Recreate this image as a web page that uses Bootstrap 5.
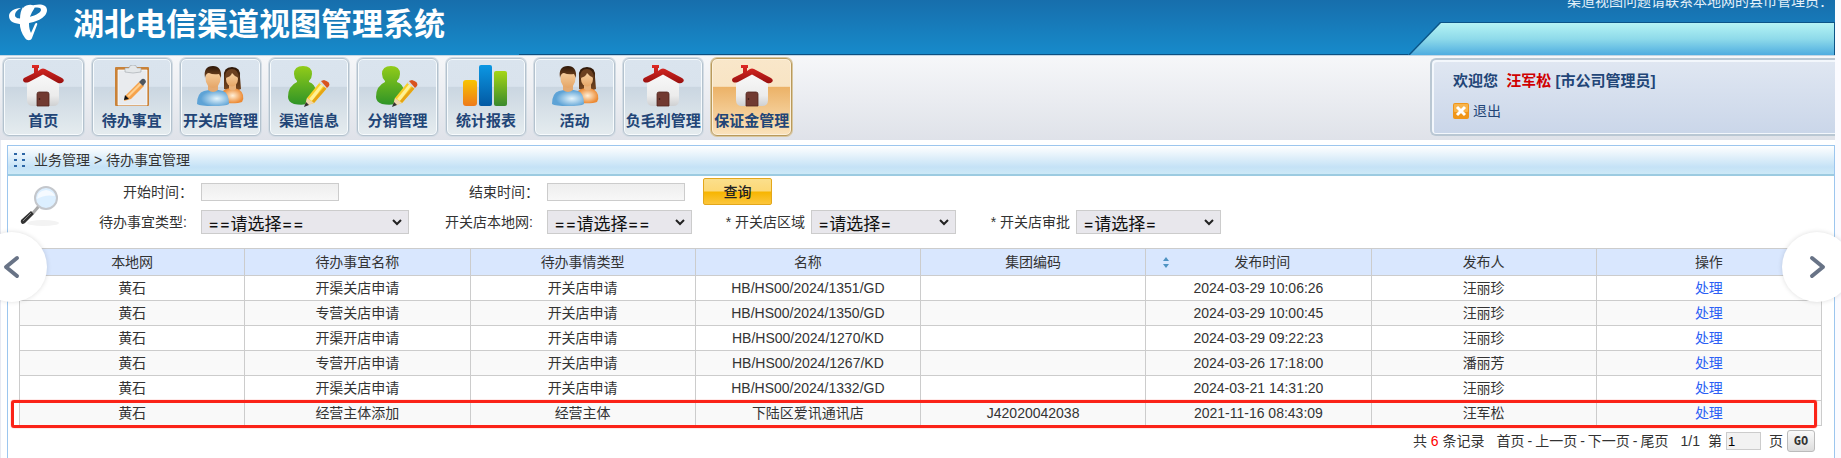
<!DOCTYPE html>
<html lang="zh-CN">
<head>
<meta charset="utf-8">
<meta name="viewport" content="width=device-width, initial-scale=1">
<title>湖北电信渠道视图管理系统</title>
<link rel="stylesheet" href="https://cdn.jsdelivr.net/npm/bootstrap@5.3.0/dist/css/bootstrap.min.css">
<style>
body{font:14px/20px "Liberation Sans","Noto Sans CJK SC",sans-serif;color:#333;background:#fbfbff;overflow:hidden}
.page{margin-right:6px;background:#fff;min-height:100vh;border-left:1px solid #e8eaf2}
.topbar{height:55px;background:linear-gradient(#176eac,#178bcb);margin-left:-1px}
.site-title{font-size:31px;line-height:50px;font-weight:700;color:#fff;padding-left:25px}
.logo{width:40px;height:38px;margin:4px 0 0 8px}
.top-right{flex:1;height:55px}
.notice{height:22px;line-height:20px;color:#e4f1fa;padding-right:2px}
.notice span{margin-top:-9px}
.tab-edge{width:427px;height:33px;background:#0b5487;clip-path:polygon(32px 0,100% 0,100% 100%,0 100%);padding:1px 1px 0 2px}
.tab-fill{height:32px;background:linear-gradient(#b5f3f4,#8edaea 50%,#4fade0);clip-path:polygon(31px 0,100% 0,100% 100%,0 100%)}
.rule-dark{flex:1;height:1px;background:#0c4f80}
.rule-gap{width:74px}
.toolbar{margin-left:-1px;border-top:1px solid #c3d6e4;background:linear-gradient(#f6f7f9,#dfe2e9);padding:2px 0 4px 3px}
.apps{display:grid;grid-template-columns:repeat(9,1fr);gap:8px;width:789px}
.app{height:78px;border:1px solid #b4c2ce;border-radius:6px;box-shadow:inset 0 0 0 1px #f7fbfd,0 0 0 1px #d3dce4;background:linear-gradient(#dae4ee 0,#d9e3ed 36%,#cad6e1 37%,#e5ecef 100%);padding:6px 0 0;color:#224577;font-weight:700;font-size:15px;line-height:20px;text-decoration:none;white-space:nowrap;display:flex;flex-direction:column;align-items:center;gap:4px}
.app svg{width:48px;height:42px;flex:none}
.app.current{border-color:#b99a5c;box-shadow:inset 0 0 0 1px #fbf0dc,0 0 0 1px #d9c79f;background:linear-gradient(#f9e7ca 0,#f8e4c4 36%,#ecb267 37%,#fae3bd 100%)}
.user-box{width:405px;height:78px;border:2px solid #b9c7d3;border-right:0;border-radius:6px 0 0 6px;box-shadow:inset 1px 1px 0 1px #f3f7fc,inset 0 -1px 0 #f3f7fc;background:linear-gradient(#e0e7f2,#cad6e9);padding:11px 0 0 21px;color:#224577}
.user-box strong{font-size:15px;display:block;line-height:20px;margin-bottom:10px}
.user-box a{color:#224577;text-decoration:none;line-height:20px}
.user-name{color:#d00000}
.panel{border:1px solid #9cc6ee;border-bottom:0;margin:5px 0 0 6px;min-height:calc(100vh - 145px)}
.crumb{height:30px;line-height:28px;border-bottom:2px solid #9ccbe1;background:linear-gradient(#fff,#c5e2f6 75%,#cde9f7);padding-left:6px}
.query{display:grid;grid-template-columns:40px 142px 208px 138px 156px 108px 145px 120px 145px;grid-template-rows:27px 24px;row-gap:5px;padding:2px 0 0 11px;align-items:center}
.query label{text-align:right;padding-right:14px;white-space:nowrap}
.query .near{padding-right:6px}
.query .wide-colon{padding-right:8px}
.query .find-icon{grid-row:1/3}
.query input{width:138px;height:18px;border:1px solid #ccc;background:linear-gradient(#eee,#f7f7f7);padding:0 3px}
.query select{height:24px;appearance:none;border:1px solid #ccc;border-radius:0;color:#111;font:17px/20px Inter,"Noto Sans CJK SC",sans-serif;padding:3px 20px 0 6px;background:#e8e7ec url("data:image/svg+xml,%3Csvg xmlns='http://www.w3.org/2000/svg' width='10' height='7'%3E%3Cpath d='M1 1l4 4 4-4' fill='none' stroke='%23222' stroke-width='2'/%3E%3C/svg%3E") no-repeat right 6px center;width:145px}
.query select.wide{width:208px}
.go-query{width:69px;height:27px;border:1px solid #e3a71b;border-radius:2px;background:linear-gradient(#fbdf8c,#fcd876 48%,#f7b500 52%,#fcc63c);font-size:14px;line-height:20px;color:#222;padding:0;font-weight:500}
.list-wrap{margin:14px 12px 0 11px;position:relative}
.todo{table-layout:fixed;margin:0;border-collapse:collapse;width:100%;text-align:center;color:#333}
.todo th,.todo td{border:1px solid #ccc;height:25px;padding:0;line-height:20px;font-weight:400;position:relative;text-align:center}
.todo th{background:#d9e7fe;height:27px}
.todo tbody tr:nth-child(even){background:#f9f9f9}
.todo a{color:#2b5ff5;text-decoration:none}
.todo .sortable{padding-left:8px}
.sorter{position:absolute;left:15px;top:8px}
.flag-row{position:absolute;left:-8px;right:5px;bottom:-2px;height:28px;border:3px solid #fb2318;border-radius:3px;box-shadow:0 0 1px #fb2318;pointer-events:none}
.pager{margin:3px 19px 0 0;height:24px}
.pager a{color:#333;text-decoration:none}
.pager input{width:35px;height:18px;border:1px solid #ccc;background:#f2f2f2;padding:0 1px;font-size:13px;line-height:16px}
.pager button{width:28px;height:22px;border:1px solid #bbb;border-radius:3px;background:linear-gradient(#fafafa,#ddd);font:700 12px/16px "DejaVu Sans Mono",monospace;color:#333;padding:0}
.total,.page-links{margin-right:12px}
.total b{font-weight:400;color:#f00}
.page-links{display:flex;gap:3px}
.slide{position:absolute;top:232px;width:70px;height:70px;border:0;border-radius:50%;background:#fff;box-shadow:0 0 5px #0002;padding:0}
.slide svg{position:absolute;top:23px;width:18px;height:24px}
.slide path{fill:none;stroke:#687386;stroke-width:4;stroke-linecap:round;stroke-linejoin:round}
.slide.prev{left:-23px}.slide.prev svg{left:25px}
.slide.next{right:-11px}.slide.next svg{left:27px}
</style>
</head>
<body>
<svg width="0" height="0" class="position-absolute" aria-hidden="true">
<defs>
<linearGradient id="gRoof" x2="0" y2="1"><stop stop-color="#df2a25"/><stop offset="1" stop-color="#98100f"/></linearGradient>
<linearGradient id="gWall" x2="0" y2="1"><stop stop-color="#fafafa"/><stop offset=".7" stop-color="#ececec"/><stop offset="1" stop-color="#cfd0d2"/></linearGradient>
<linearGradient id="gGreen" x2="0" y2="1"><stop stop-color="#92cc19"/><stop offset="1" stop-color="#2f9427"/></linearGradient>
<linearGradient id="gOrange" x2="0" y2="1"><stop stop-color="#f8c400"/><stop offset="1" stop-color="#ee7a1b"/></linearGradient>
<linearGradient id="gBlue" x2="0" y2="1"><stop stop-color="#0b97e3"/><stop offset="1" stop-color="#0359a3"/></linearGradient>
<linearGradient id="gLime" x2="0" y2="1"><stop stop-color="#a5d615"/><stop offset="1" stop-color="#3a8a2e"/></linearGradient>
<radialGradient id="gShirt" cx=".62" cy=".55"><stop stop-color="#e6f5fc"/><stop offset="1" stop-color="#5ea3d6"/></radialGradient>
<radialGradient id="gDress" cx=".5" cy=".5"><stop stop-color="#fff0d8"/><stop offset="1" stop-color="#ec8a34"/></radialGradient>
<linearGradient id="gSkin" x2="0" y2="1"><stop stop-color="#f9d6a8"/><stop offset="1" stop-color="#e5a566"/></linearGradient>
<linearGradient id="gHair" x2="0" y2="1"><stop stop-color="#2d1708"/><stop offset="1" stop-color="#7b4a22"/></linearGradient>
<symbol id="house" viewBox="0 0 48 42"><path d="M8 16 24 6l16 10v19q0 6-6 6H14q-6 0-6-6z" fill="url(#gWall)"/><path d="M13 0h7v3h-1v3l3-2q2-1 4 0l17 9q3 2 1 4-2 2-5 1L24 9.500 10 17q-3 1-5 0-2-2 0-4l10-5V3h-2z" fill="url(#gRoof)"/><path d="M18 41V29q0-2 2-2h8q2 0 2 2v12z" fill="#713a31" stroke="#542720" stroke-width=".8"/><circle cx="20.500" cy="34" r=".8" fill="#2c1310"/></symbol>
<symbol id="clipboard" viewBox="0 0 48 42"><rect x="7" y="2" width="34" height="39" rx="1" fill="#c98238"/><path d="M10 5h29v35H10z" fill="#e9ebee" stroke="#fff" stroke-width=".7"/><path d="M17 7V3h4q0-3 4-3t4 3h4v4q-8 2-16 0z" fill="#e4e7e9" stroke="#a0a5aa" stroke-width=".6"/><path d="m18 30 13-13 5 4-13 13-7 2z" fill="#f5a34c"/><path d="m19 31 13-13 2 1-13 13z" fill="#ffd08f"/><path d="m31 17 3-3q3-1 4 3l-3 4z" fill="#4d555e"/><path d="m17 30 4 4-5 1z" fill="#111"/></symbol>
<symbol id="people" viewBox="0 0 48 42"><path d="M28 12q-1-10 8-10t8 10l1 12q-8 4-17 0z" fill="url(#gHair)"/><path d="M26 38V27q4-4 10-4 9 0 11 7 1 4-1 7-4 2-20 1z" fill="url(#gDress)"/><path d="M33 19h7v5q-3 3-7 0z" fill="#e9b27b"/><ellipse cx="36" cy="14" rx="6" ry="7.500" fill="url(#gSkin)"/><path d="M29 13q0-9 7-9 6 0 7 9-4-1-7-5-1 4-7 5z" fill="#6b4020"/><path d="M1 39q0-11 7-13 10-3 19 0 6 2 6 13-3 2-16 2T1 39z" fill="url(#gShirt)"/><path d="M12 20h10v5q-5 4-10 0z" fill="#e4aa72"/><ellipse cx="17" cy="13.500" rx="7.500" ry="9.500" fill="url(#gSkin)"/><path d="M9 13Q7 1 17 1q9 0 8 12l-2-4q-6 1-10-1-3 0-4 5z" fill="url(#gHair)"/></symbol>
<symbol id="useredit" viewBox="0 0 48 42"><path d="M9 9q0-8 9-8t9 8q0 4-3 7v1q6 2 7 9l-4 12q-9 3-18 1-6-2-6-7 0-11 9-15v-1q-3-3-3-7z" fill="url(#gGreen)"/><path d="m22 33 13-16 7 6-13 15-9 3z" fill="#f9cf28"/><path d="m24 34 13-16 2 2-12 16z" fill="#fff195"/><path d="m27 36 13-15 2 2-13 15z" fill="#e6a515"/><path d="m22 33 7 5-9 3z" fill="#f0d4ad"/><path d="m21 37 3 3-5 2z" fill="#333"/><path d="m34 18 3-3 8 5-3 4z" fill="#d8dde0"/><path d="m36 16 3-1q7 2 5 6l-2 2z" fill="#d9531e"/></symbol>
<symbol id="bars" viewBox="0 0 48 42"><rect x="1" y="15" width="14" height="26" rx="3" fill="url(#gOrange)"/><rect x="17" width="13" height="41" rx="2" fill="url(#gBlue)"/><rect x="32" y="6" width="13" height="35" rx="2" fill="url(#gLime)"/></symbol>
</defs>
</svg>
<div class="page">
<header class="topbar d-flex">
  <svg class="logo flex-shrink-0" viewBox="0 0 40 38" role="img" aria-label="中国电信" fill="#fff"><path d="M15 4c4-5 14-4 11 1-3 4-5 9-5 15 0 4 1 7 2 9l4-9c1-2 3-1 2 1l-5 13c-1 3-5 3-7 0-4-5-6-12-5-19 0-5 1-9 3-12z"/><path d="M22 3c7-4 17-3 17 3 0 8-12 13-25 14C7 20 1 18 1 12c0-4 5-8 12-8-4 2-6 4-6 7 0 4 6 4 11 3 8-2 15-5 15-8 0-3-5-3-11-1z"/></svg>
  <div class="site-title text-nowrap">湖北电信渠道视图管理系统</div>
  <div class="top-right d-flex align-items-end ms-auto">
    <div class="rule-gap"></div><div class="rule-dark"></div>
    <div>
      <div class="notice d-flex justify-content-end text-nowrap"><span>渠道视图问题请联系本地网的县市管理员：</span></div>
      <div class="tab-edge"><div class="tab-fill"></div></div>
    </div>
  </div>
</header>
<div class="toolbar d-flex justify-content-between">
  <nav class="apps" aria-label="主菜单">
    <a class="app" href="#"><svg><use href="#house"/></svg>首页</a>
    <a class="app" href="#"><svg><use href="#clipboard"/></svg>待办事宜</a>
    <a class="app" href="#"><svg><use href="#people"/></svg>开关店管理</a>
    <a class="app" href="#"><svg><use href="#useredit"/></svg>渠道信息</a>
    <a class="app" href="#"><svg><use href="#useredit"/></svg>分销管理</a>
    <a class="app" href="#"><svg><use href="#bars"/></svg>统计报表</a>
    <a class="app" href="#"><svg><use href="#people"/></svg>活动</a>
    <a class="app" href="#"><svg><use href="#house"/></svg>负毛利管理</a>
    <a class="app current" href="#" aria-current="page"><svg><use href="#house"/></svg>保证金管理</a>
  </nav>
  <div class="user-box">
    <strong>欢迎您&nbsp; <span class="user-name">汪军松</span> [市公司管理员]</strong>
    <a href="#" class="d-inline-flex align-items-center gap-1"><svg width="16" height="16"><rect width="16" height="16" rx="2" fill="#f0961a"/><rect x="1" y="1" width="14" height="8" rx="1" fill="#f8b44c"/><path d="m4 4 8 8m0-8-8 8" stroke="#fff" stroke-width="3"/></svg>退出</a>
  </div>
</div>
<main class="panel">
  <div class="crumb d-flex align-items-center gap-2">
    <svg width="12" height="16" fill="#2c66a6"><path d="M0 1h3v2H0zm8 0h3v2H8zM0 7h3v2H0zm8 0h3v2H8zM0 13h3v2H0zm8 0h3v2H8z"/></svg>
    <span>业务管理 &gt; 待办事宜管理</span>
  </div>
  <form class="query" onsubmit="return false">
    <svg class="find-icon" width="40" height="42" aria-hidden="true"><ellipse cx="24" cy="38" rx="16" ry="3" fill="#f3f3f3"/><path d="m20 21-6 7" stroke="#aaa" stroke-width="3"/><path d="M12 26 2 35q-1 2 1 4 2 0 3-1l9-9z" fill="#333"/><path d="m12 28-8 8" stroke="#888"/><circle cx="27" cy="13" r="11" fill="#dcefff" stroke="#c4c7cc" stroke-width="2"/><path d="M18 14q0-8 9-9 7 1 9 6-10-2-18 3z" fill="#f5faff"/></svg>
    <label for="t0" class="wide-colon">开始时间：</label><input id="t0" type="text">
    <label for="t1" class="wide-colon">结束时间：</label><input id="t1" type="text">
    <button class="go-query">查询</button><span></span><span></span><span></span>
    <label for="s0">待办事宜类型:</label><select id="s0" class="wide"><option>==请选择==</option></select>
    <label for="s1">开关店本地网:</label><select id="s1"><option>==请选择==</option></select>
    <label for="s2" class="near">* 开关店区域</label><select id="s2"><option>=请选择=</option></select>
    <label for="s3" class="near">* 开关店审批</label><select id="s3"><option>=请选择=</option></select>
  </form>
  <div class="list-wrap">
    <table class="todo">
      <thead><tr><th>本地网</th><th>待办事宜名称</th><th>待办事情类型</th><th>名称</th><th>集团编码</th><th class="sortable"><svg class="sorter" width="10" height="11" fill="#4f93c2"><path d="m2 4 3-4 3 4zm0 3h6l-3 4z"/></svg>发布时间</th><th>发布人</th><th>操作</th></tr></thead>
      <tbody>
        <tr><td>黄石</td><td>开渠关店申请</td><td>开关店申请</td><td>HB/HS00/2024/1351/GD</td><td></td><td>2024-03-29 10:06:26</td><td>汪丽珍</td><td><a href="#">处理</a></td></tr>
        <tr><td>黄石</td><td>专营关店申请</td><td>开关店申请</td><td>HB/HS00/2024/1350/GD</td><td></td><td>2024-03-29 10:00:45</td><td>汪丽珍</td><td><a href="#">处理</a></td></tr>
        <tr><td>黄石</td><td>开渠开店申请</td><td>开关店申请</td><td>HB/HS00/2024/1270/KD</td><td></td><td>2024-03-29 09:22:23</td><td>汪丽珍</td><td><a href="#">处理</a></td></tr>
        <tr><td>黄石</td><td>专营开店申请</td><td>开关店申请</td><td>HB/HS00/2024/1267/KD</td><td></td><td>2024-03-26 17:18:00</td><td>潘丽芳</td><td><a href="#">处理</a></td></tr>
        <tr><td>黄石</td><td>开渠关店申请</td><td>开关店申请</td><td>HB/HS00/2024/1332/GD</td><td></td><td>2024-03-21 14:31:20</td><td>汪丽珍</td><td><a href="#">处理</a></td></tr>
        <tr><td>黄石</td><td>经营主体添加</td><td>经营主体</td><td>下陆区爱讯通讯店</td><td>J42020042038</td><td>2021-11-16 08:43:09</td><td>汪军松</td><td><a href="#">处理</a></td></tr>
      </tbody>
    </table>
    <div class="flag-row"></div>
  </div>
  <div class="pager d-flex justify-content-end align-items-center text-nowrap">
    <span class="total">共 <b>6</b> 条记录</span>
    <span class="page-links"><a href="#">首页</a>-<a href="#">上一页</a>-<a href="#">下一页</a>-<a href="#">尾页</a></span>
    <span class="me-2">1/1</span><label for="pg" class="me-1">第</label><input id="pg" type="text" value="1"><span class="ms-2 me-1">页</span><button type="button">GO</button>
  </div>
</main>
</div>
<button class="slide prev" aria-label="上一张"><svg viewBox="0 0 18 24"><path d="M15 3 4 12l11 9"/></svg></button>
<button class="slide next" aria-label="下一张"><svg viewBox="0 0 18 24"><path d="m3 3 11 9-11 9"/></svg></button>
<script src="https://cdn.jsdelivr.net/npm/bootstrap@5.3.0/dist/js/bootstrap.bundle.min.js"></script>
</body>
</html>
